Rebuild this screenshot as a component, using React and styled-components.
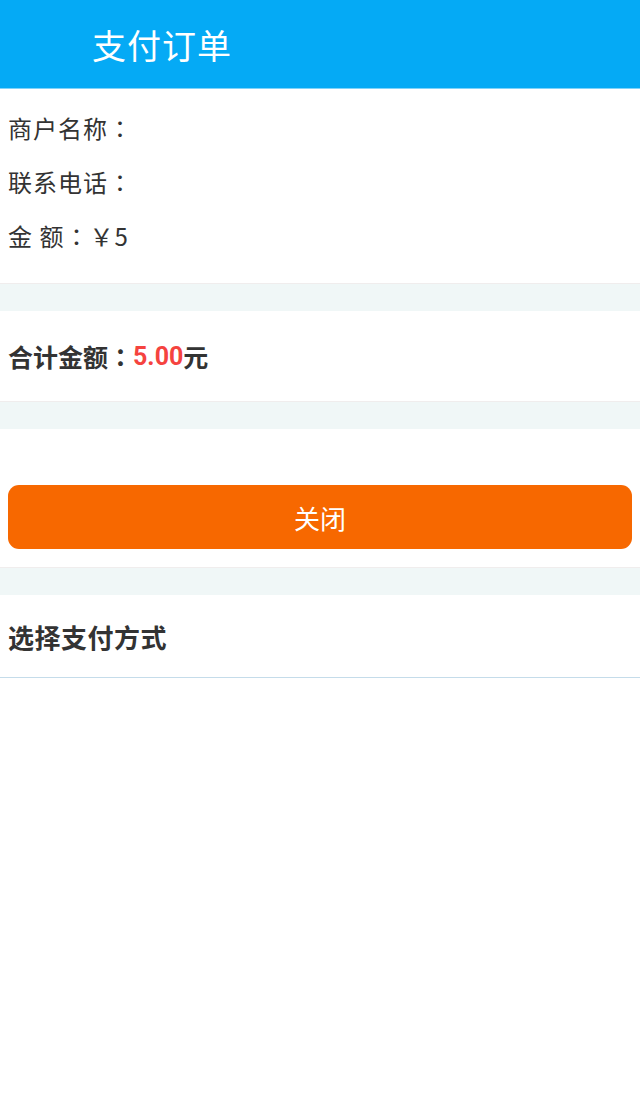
import React from 'react';
import styled, { createGlobalStyle } from 'styled-components';

const GlobalStyle = createGlobalStyle`
  html, body {
    margin: 0;
    padding: 0;
    background: #fff;
    font-family: "Noto Sans CJK SC", "Noto Sans", sans-serif;
  }
`;

const Page = styled.div`
  width: 640px;
  background: #fff;
`;

const Header = styled.header`
  height: 88px;
  background: #05aaf5;
  border-bottom: 1px solid #7fd3fa;
  display: flex;
  align-items: center;
  padding-left: 92px;
  color: #fff;
  font-size: 34px;
  letter-spacing: 1px;
`;

const Section = styled.section`
  background: #fff;
  padding: 0 8px;
  border-bottom: 1px solid ${(p) => p.$line || '#f0eded'};
`;

const Spacer = styled.div`
  height: 27px;
  background: #f0f7f7;
`;

const InfoList = styled.div`
  display: flex;
  flex-direction: column;
  gap: 22px;
  padding: 23px 0 31px;
`;

const InfoRow = styled.div`
  font-size: 24px;
  line-height: 32px;
  color: #333;
  letter-spacing: 1px;
`;

// centred full-width colon, like the reference's fallback font
const Colon = styled.span`
  font-family: "Noto Sans CJK JP", sans-serif;
`;

const TotalRow = styled.div`
  height: 90px;
  display: flex;
  align-items: center;
  font-size: 25px;
  font-weight: bold;
  color: #333;
`;

const Amount = styled.span`
  color: #f5433f;
  font-family: Roboto, "Liberation Sans", sans-serif;
`;

const ButtonWrap = styled.div`
  padding: 56px 0 18px;
`;

const CloseButton = styled.button`
  display: block;
  width: 100%;
  height: 64px;
  border: none;
  border-radius: 11px;
  background: #f76800;
  color: #fff;
  font-family: inherit;
  font-size: 26px;
  cursor: pointer;
`;

const Title = styled.div`
  height: 82px;
  display: flex;
  align-items: center;
  font-size: 26px;
  font-weight: bold;
  color: #333;
  letter-spacing: 0.5px;
`;

export default function App() {
  return (
    <Page>
      <GlobalStyle />
      <Header>支付订单</Header>
      <Section>
        <InfoList>
          <InfoRow>商户名称<Colon>：</Colon></InfoRow>
          <InfoRow>联系电话<Colon>：</Colon></InfoRow>
          <InfoRow>金 额<Colon>：</Colon>￥5</InfoRow>
        </InfoList>
      </Section>
      <Spacer />
      <Section>
        <TotalRow>
          合计金额<Colon>：</Colon><Amount>5.00</Amount>元
        </TotalRow>
      </Section>
      <Spacer />
      <Section>
        <ButtonWrap>
          <CloseButton>关闭</CloseButton>
        </ButtonWrap>
      </Section>
      <Spacer />
      <Section $line="#c5dcea">
        <Title>选择支付方式</Title>
      </Section>
    </Page>
  );
}
